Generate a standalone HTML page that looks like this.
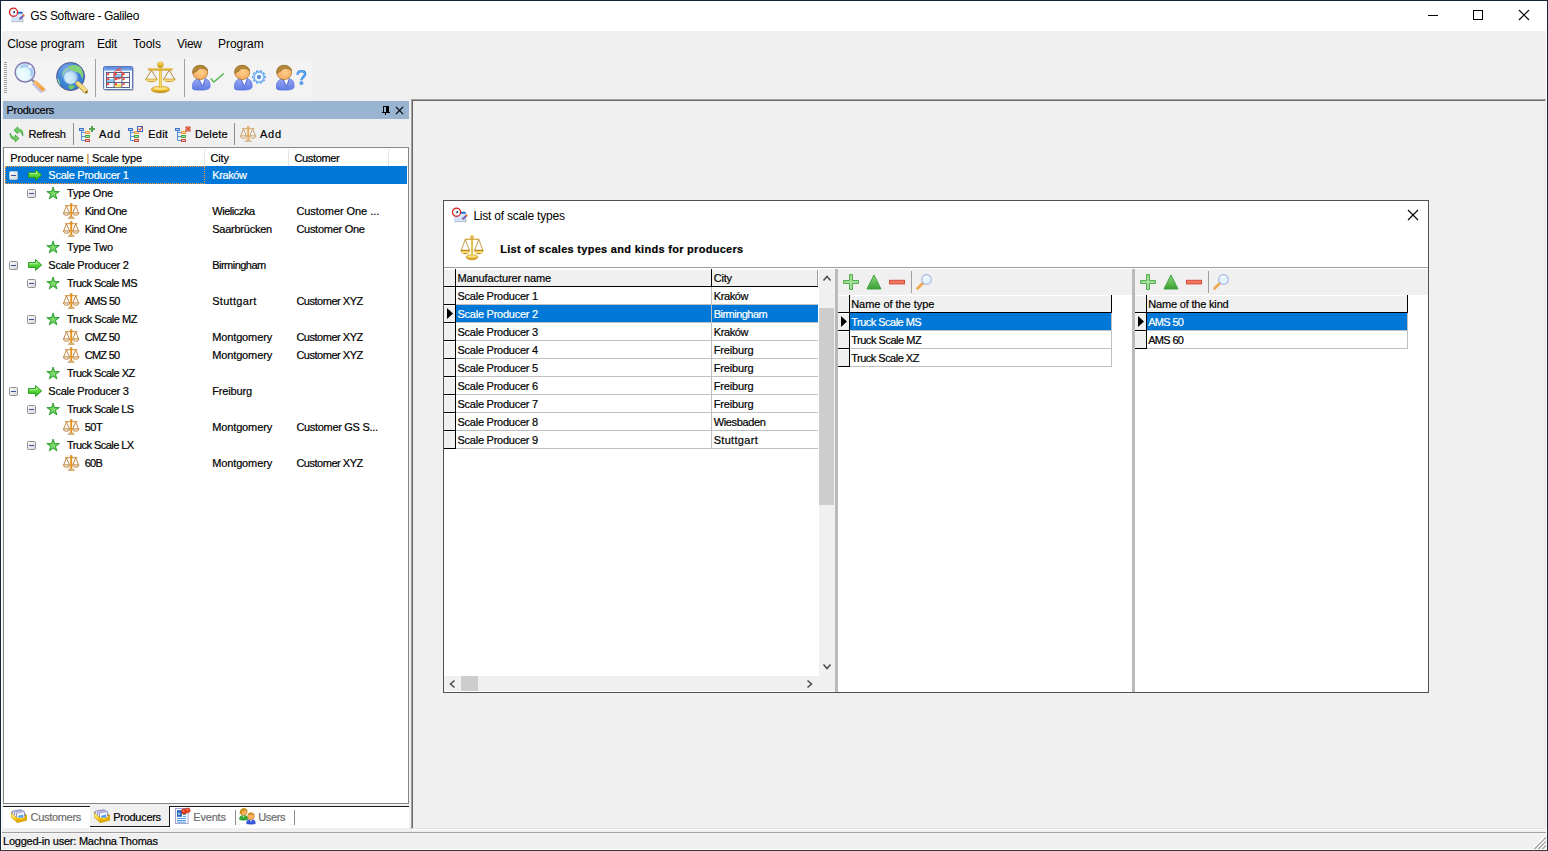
<!DOCTYPE html>
<html><head><meta charset="utf-8"><title>GS Software - Galileo</title>
<style>
html,body{margin:0;padding:0;}
body{width:1548px;height:851px;background:#f0f0f0;position:relative;overflow:hidden;font-family:"Liberation Sans",sans-serif;font-size:11px;}
div,span.t,svg{position:absolute;}
span.t{white-space:nowrap;line-height:16px;-webkit-text-stroke:0.2px;}
span.u{-webkit-text-stroke:0;}
svg{overflow:visible;}
</style></head><body>

<svg width="0" height="0" style="left:0;top:0"><defs>
<radialGradient id="gLens" cx="0.35" cy="0.65" r="0.8"><stop offset="0" stop-color="#f4ffff"/><stop offset="0.55" stop-color="#dcf6fc"/><stop offset="1" stop-color="#9cbcec"/></radialGradient>
<linearGradient id="gHandle" x1="0" y1="0" x2="1" y2="1"><stop offset="0" stop-color="#fbbd6a"/><stop offset="1" stop-color="#f09a3c"/></linearGradient>
<radialGradient id="gGlobe" cx="0.4" cy="0.3" r="0.8"><stop offset="0" stop-color="#8fb0ea"/><stop offset="0.5" stop-color="#3f86d8"/><stop offset="1" stop-color="#3a76c8"/></radialGradient>
<linearGradient id="gGold" x1="0" y1="0" x2="0" y2="1"><stop offset="0" stop-color="#fae480"/><stop offset="0.55" stop-color="#ecbc2c"/><stop offset="1" stop-color="#bc8414"/></linearGradient>
<linearGradient id="gGoldH" x1="0" y1="0" x2="1" y2="0"><stop offset="0" stop-color="#d9a520"/><stop offset="0.45" stop-color="#fbe27a"/><stop offset="1" stop-color="#d9a520"/></linearGradient>
<radialGradient id="gFace" cx="0.55" cy="0.45" r="0.7"><stop offset="0" stop-color="#ffd08c"/><stop offset="1" stop-color="#f3a458"/></radialGradient>
<linearGradient id="gBody" x1="0" y1="0" x2="0" y2="1"><stop offset="0" stop-color="#9aa8f4"/><stop offset="1" stop-color="#5f7be4"/></linearGradient>
<linearGradient id="gCalT" x1="0" y1="0" x2="0" y2="1"><stop offset="0" stop-color="#4f7fd6"/><stop offset="1" stop-color="#86b6f2"/></linearGradient>
<linearGradient id="gGreen" x1="0" y1="0" x2="0" y2="1"><stop offset="0" stop-color="#8fdc7c"/><stop offset="1" stop-color="#3aa035"/></linearGradient>
<linearGradient id="gArrow" x1="0" y1="0" x2="0" y2="1"><stop offset="0" stop-color="#b4f48c"/><stop offset="0.5" stop-color="#5cd83c"/><stop offset="1" stop-color="#2cae1c"/></linearGradient>
<linearGradient id="gExp" x1="0" y1="0" x2="1" y2="1"><stop offset="0" stop-color="#ffffff"/><stop offset="1" stop-color="#d4d4d4"/></linearGradient>
<linearGradient id="gBoxL" x1="0" y1="0" x2="1" y2="1"><stop offset="0" stop-color="#fff8a0"/><stop offset="0.6" stop-color="#fcd020"/><stop offset="1" stop-color="#e0a000"/></linearGradient>
</defs></svg>
<div style="left:0px;top:0px;width:1548px;height:851px;background:#f0f0f0;"></div>
<div style="left:1px;top:1px;width:1546px;height:30px;background:#ffffff;"></div>
<div style="left:1px;top:31px;width:1px;height:819px;background:#ffffff;"></div>
<div style="left:1546px;top:31px;width:1px;height:819px;background:#ffffff;"></div>
<div style="left:0px;top:0px;width:1548px;height:1px;background:#16233d;"></div>
<div style="left:0px;top:0px;width:1px;height:851px;background:#16233d;"></div>
<div style="left:1547px;top:0px;width:1px;height:851px;background:#16233d;"></div>
<div style="left:0px;top:850px;width:1548px;height:1px;background:#3a3a3a;"></div>
<svg style="left:9px;top:7px;" width="16" height="16" viewBox="0 0 16 16"><rect x="2.2" y="13.6" width="12" height="1.5" fill="#787878" opacity="0.8"/><rect x="2" y="5" width="11.8" height="9.4" fill="#dce9fb"/><rect x="2" y="9.5" width="11.8" height="4.9" fill="#cfe2fa"/><rect x="8" y="4.8" width="5.6" height="1.8" fill="#1264d4"/><rect x="13.4" y="5.6" width="0.8" height="9" fill="#8c8c94" opacity="0.7"/><circle cx="4.5" cy="5.3" r="4.1" fill="#eef8ff" stroke="#d41818" stroke-width="1.2"/><path d="M4.5 1.3V2.2M4.5 8.4V9.3M0.5 5.3H1.4M7.6 5.3H8.5" stroke="#f07040" stroke-width="0.8"/><path d="M5.2 4V5.6L4.4 5.8" stroke="#101020" stroke-width="1.1" fill="none"/><path d="M10.8 11.9L14 9.1" stroke="#6c5cc4" stroke-width="2"/><path d="M10.2 12.5L10.9 11.8" stroke="#c07818" stroke-width="1.6"/><path d="M14.1 9L15.2 8" stroke="#f04020" stroke-width="1.8"/><rect x="14.8" y="8.4" width="1" height="1" fill="#f8c820"/></svg>
<span class="t u" style="left:30.3px;top:7.84px;font-size:12px;color:#000;font-weight:400;letter-spacing:-0.352px;">GS Software - Galileo</span>
<svg style="left:1428px;top:10px;" width="10" height="10" viewBox="0 0 10 10"><path d="M0 5.5H10" stroke="#000" stroke-width="1"/></svg>
<svg style="left:1473px;top:10px;" width="10" height="10" viewBox="0 0 10 10"><rect x="0.5" y="0.5" width="9" height="9" fill="none" stroke="#000" stroke-width="1"/></svg>
<svg style="left:1519px;top:10px;" width="10" height="10" viewBox="0 0 10 10"><path d="M0 0L10 10M10 0L0 10" stroke="#000" stroke-width="1.1"/></svg>
<span class="t u" style="left:7.2px;top:35.84px;font-size:12px;color:#000;font-weight:400;letter-spacing:-0.117px;">Close program</span>
<span class="t u" style="left:97px;top:35.84px;font-size:12px;color:#000;font-weight:400;letter-spacing:-0.229px;">Edit</span>
<span class="t u" style="left:133px;top:35.84px;font-size:12px;color:#000;font-weight:400;letter-spacing:-0.004px;">Tools</span>
<span class="t u" style="left:177px;top:35.84px;font-size:12px;color:#000;font-weight:400;letter-spacing:-0.266px;">View</span>
<span class="t u" style="left:218px;top:35.84px;font-size:12px;color:#000;font-weight:400;letter-spacing:-0.053px;">Program</span>
<div style="left:2px;top:58px;width:311px;height:40px;background:#f3f3f3;"></div>
<div style="left:4px;top:62px;width:3px;height:1px;background:#a0a0a0;"></div>
<div style="left:4px;top:64px;width:3px;height:1px;background:#a0a0a0;"></div>
<div style="left:4px;top:66px;width:3px;height:1px;background:#a0a0a0;"></div>
<div style="left:4px;top:68px;width:3px;height:1px;background:#a0a0a0;"></div>
<div style="left:4px;top:70px;width:3px;height:1px;background:#a0a0a0;"></div>
<div style="left:4px;top:72px;width:3px;height:1px;background:#a0a0a0;"></div>
<div style="left:4px;top:74px;width:3px;height:1px;background:#a0a0a0;"></div>
<div style="left:4px;top:76px;width:3px;height:1px;background:#a0a0a0;"></div>
<div style="left:4px;top:78px;width:3px;height:1px;background:#a0a0a0;"></div>
<div style="left:4px;top:80px;width:3px;height:1px;background:#a0a0a0;"></div>
<div style="left:4px;top:82px;width:3px;height:1px;background:#a0a0a0;"></div>
<div style="left:4px;top:84px;width:3px;height:1px;background:#a0a0a0;"></div>
<div style="left:4px;top:86px;width:3px;height:1px;background:#a0a0a0;"></div>
<div style="left:4px;top:88px;width:3px;height:1px;background:#a0a0a0;"></div>
<div style="left:4px;top:90px;width:3px;height:1px;background:#a0a0a0;"></div>
<div style="left:4px;top:92px;width:3px;height:1px;background:#a0a0a0;"></div>
<div style="left:95px;top:59px;width:1px;height:38px;background:#a0a0a0;"></div>
<div style="left:184px;top:59px;width:1px;height:38px;background:#a0a0a0;"></div>
<svg style="left:14px;top:61px;" width="32" height="32" viewBox="0 0 32 32"><path d="M19 22L28.2 31.2" stroke="#c4c4ec" stroke-width="3.6"/><path d="M17.5 18.5L21 21.6" stroke="#8c8c94" stroke-width="2.2"/><path d="M20.6 20.4L30.6 29.8" stroke="url(#gHandle)" stroke-width="3.8"/><path d="M29.4 31L32 28.4" stroke="#d8d8e8" stroke-width="1.6"/><circle cx="11" cy="11.2" r="9.8" fill="url(#gLens)" stroke="#847eb2" stroke-width="1.5"/><path d="M6.5 6.5C10 3.5 15.5 4.5 17.5 10.5C17.8 12 17.5 14 17 15" stroke="#9cc0f0" stroke-width="2.6" fill="none" opacity="0.75"/><circle cx="15.8" cy="5.6" r="1.7" fill="#fff"/></svg>
<svg style="left:56px;top:61px;" width="32" height="32" viewBox="0 0 32 32"><circle cx="14.6" cy="15.5" r="14" fill="url(#gGlobe)" stroke="#585890" stroke-width="1.0"/><path d="M12 6C14 4 20 3 24 6C27 9 28 14 26.5 18C25 16 25 13 23 12C21 11 19 12 17 10C15 9 13 9 12 6Z" fill="#86d27a"/><path d="M12.5 6.5C10 7 7.5 9 6.5 12.5C6.3 13.5 6.5 15 7 16C7.5 13 9 10.5 11 9C12 8.3 12.5 7.5 12.5 6.5Z" fill="#9adc90" opacity="0.85"/><path d="M1.5 17C3 18 4 21 4 24C2.5 22 1.5 19 1.5 17Z" fill="#96e488"/><path d="M12 25C14 24 17 24 19 25C18 27 16 28.5 14 28.5C13 27.5 12.5 26 12 25Z" fill="#72cc62"/><circle cx="14.6" cy="16.4" r="6.9" fill="url(#gLens)" stroke="#86b0e4" stroke-width="0.9" opacity="0.82"/><path d="M21.8 22.6L29.8 30.2" stroke="#b89848" stroke-width="4.8" stroke-linecap="round"/><path d="M21.8 22.3L29.6 29.7" stroke="#f8dc84" stroke-width="3.4" stroke-linecap="round"/><circle cx="30.4" cy="30.9" r="0.9" fill="#604818"/></svg>
<svg style="left:102px;top:61px;" width="32" height="32" viewBox="0 0 32 32"><rect x="2.6" y="6.8" width="29.4" height="23.2" rx="1" fill="#808080" opacity="0.35"/><rect x="1.6" y="5.6" width="29" height="23" rx="1" fill="#f2f8ff" stroke="#4a6cb4" stroke-width="1"/><rect x="2.1" y="6.1" width="28" height="3.6" fill="url(#gCalT)"/><rect x="4.5" y="11.5" width="23" height="15" fill="#fafcff" stroke="#50507a" stroke-width="0.9"/><rect x="5.2" y="12.200000000000001" width="2" height="1.9" fill="#f23828"/><rect x="12.8" y="13.1" width="6.9" height="3.2" fill="#84c4f2"/><rect x="12.900000000000002" y="12.200000000000001" width="2" height="1.9" fill="#f23828"/><rect x="20.6" y="12.200000000000001" width="2" height="1.9" fill="#f23828"/><rect x="5.1000000000000005" y="18.099999999999998" width="6.9" height="3.2" fill="#8ccdf4"/><rect x="5.2" y="17.2" width="2" height="1.9" fill="#f23828"/><rect x="12.900000000000002" y="17.2" width="2" height="1.9" fill="#f23828"/><rect x="20.6" y="17.2" width="2" height="1.9" fill="#f23828"/><rect x="5.2" y="22.2" width="2" height="1.9" fill="#f23828"/><rect x="12.8" y="23.099999999999998" width="6.9" height="3.2" fill="#f8e468"/><rect x="12.900000000000002" y="22.2" width="2" height="1.9" fill="#f23828"/><rect x="20.6" y="22.2" width="2" height="1.9" fill="#f23828"/><path d="M12.2 11.5V26.5M19.9 11.5V26.5M4.5 16.5H27.5M4.5 21.5H27.5" stroke="#50507a" stroke-width="0.9"/><circle cx="16.2" cy="13.6" r="4.3" fill="none" stroke="#f04c3c" stroke-width="1.1"/><path d="M14.6 9.6C15.6 8.2 17.6 7.4 19.6 7.6" stroke="#f04c3c" stroke-width="1.1" fill="none"/></svg>
<svg style="left:144px;top:61px;" width="32" height="32" viewBox="0 0 32 32"><path d="M1.8000000000000003 18.3L7.4 9.3L13.0 18.3" fill="none" stroke="#a88030" stroke-width="0.9"/><path d="M19.599999999999998 18.3L25.2 9.3L30.8 18.3" fill="none" stroke="#a88030" stroke-width="0.9"/><ellipse cx="16.4" cy="28.5" rx="9.2" ry="3.3" fill="url(#gGold)" stroke="#b88418" stroke-width="0.6"/><ellipse cx="16.4" cy="27.675" rx="6.4399999999999995" ry="1.4849999999999999" fill="#fce88a" opacity="0.7"/><rect x="14.999999999999998" y="7.4" width="2.8" height="19.6" fill="url(#gGoldH)"/><rect x="4.5" y="7.4" width="23.7" height="1.9000000000000004" fill="url(#gGold)" stroke="#c89a28" stroke-width="0.4"/><circle cx="16.4" cy="3.8" r="3.0" fill="url(#gGold)" stroke="#c89a28" stroke-width="0.5"/><path d="M1.4000000000000004 18.0H13.4C13.4 21.625 1.4000000000000004 21.625 1.4000000000000004 18.0Z" fill="url(#gGold)" stroke="#b88418" stroke-width="0.5"/><path d="M2.2 19.595H12.6" stroke="#fdf0a0" stroke-width="0.87" opacity="0.8"/><path d="M19.2 18.0H31.2C31.2 21.625 19.2 21.625 19.2 18.0Z" fill="url(#gGold)" stroke="#b88418" stroke-width="0.5"/><path d="M20.0 19.595H30.4" stroke="#fdf0a0" stroke-width="0.87" opacity="0.8"/></svg>
<svg style="left:192px;top:61px;" width="32" height="32" viewBox="0 0 32 32"><path d="M0.5 27.4C0.2 22.5 1.2 19.8 4.6 18.4L7.4 17.6H12.6L14.6 18.2C17 19.2 18.2 21.5 18.1 25.6C18 28.2 14.5 29.1 9.2 29.1C4.2 29.1 0.7 28.9 0.5 27.4Z" fill="url(#gBody)" stroke="#4c6cd8" stroke-width="0.7"/><path d="M7 17.4L10.4 24.6L13 17.4Z" fill="#ffffff"/><path d="M6.2 18L10 26L10.5 24.6L7.2 17.6ZM13 17.6L10.4 24.6L11 26L14 18.2Z" fill="#6078dc"/><ellipse cx="8.2" cy="11.5" rx="7.4" ry="7.1" fill="url(#gFace)" stroke="#a8742c" stroke-width="0.8"/><path d="M0.8 12.4C0 7 3.6 4.2 8.4 4.3C12.6 4.4 15.2 6.8 15.7 9.6C13.4 7.6 9.4 7 6.4 8C5.8 9.6 5 10.6 3.4 10.9C2.6 11.1 1.8 11.6 0.8 12.4Z" fill="#b08838" stroke="#8c6424" stroke-width="0.5"/><path d="M18.8 17.4L21.9 21L31.6 12.6" fill="none" stroke="#52b852" stroke-width="1.5"/><path d="M19.6 17.2L22 19.8L30.5 12.6" stroke="#c0f0b0" stroke-width="0.6" fill="none" opacity="0.8"/></svg>
<svg style="left:234px;top:61px;" width="32" height="32" viewBox="0 0 32 32"><path d="M0.5 27.4C0.2 22.5 1.2 19.8 4.6 18.4L7.4 17.6H12.6L14.6 18.2C17 19.2 18.2 21.5 18.1 25.6C18 28.2 14.5 29.1 9.2 29.1C4.2 29.1 0.7 28.9 0.5 27.4Z" fill="url(#gBody)" stroke="#4c6cd8" stroke-width="0.7"/><path d="M7 17.4L10.4 24.6L13 17.4Z" fill="#ffffff"/><path d="M6.2 18L10 26L10.5 24.6L7.2 17.6ZM13 17.6L10.4 24.6L11 26L14 18.2Z" fill="#6078dc"/><ellipse cx="8.2" cy="11.5" rx="7.4" ry="7.1" fill="url(#gFace)" stroke="#a8742c" stroke-width="0.8"/><path d="M0.8 12.4C0 7 3.6 4.2 8.4 4.3C12.6 4.4 15.2 6.8 15.7 9.6C13.4 7.6 9.4 7 6.4 8C5.8 9.6 5 10.6 3.4 10.9C2.6 11.1 1.8 11.6 0.8 12.4Z" fill="#b08838" stroke="#8c6424" stroke-width="0.5"/><polygon points="31.58,15.48 31.58,16.52 29.76,17.14 29.53,17.88 30.63,19.45 30.02,20.29 28.18,19.73 27.56,20.18 27.53,22.10 26.54,22.42 25.38,20.88 24.62,20.88 23.46,22.42 22.47,22.10 22.44,20.18 21.82,19.73 19.98,20.29 19.37,19.45 20.47,17.88 20.24,17.14 18.42,16.52 18.42,15.48 20.24,14.86 20.47,14.12 19.37,12.55 19.98,11.71 21.82,12.27 22.44,11.82 22.47,9.90 23.46,9.58 24.62,11.12 25.38,11.12 26.54,9.58 27.53,9.90 27.56,11.82 28.18,12.27 30.02,11.71 30.63,12.55 29.53,14.12 29.76,14.86" fill="#9ccaf8" stroke="#4a96ec" stroke-width="0.9" stroke-linejoin="round"/><circle cx="25" cy="16" r="3.9" fill="#eef7ff"/><circle cx="25" cy="16" r="1.7" fill="#6c88c0" stroke="#4a86e0" stroke-width="0.8"/></svg>
<svg style="left:276px;top:61px;" width="32" height="32" viewBox="0 0 32 32"><path d="M0.5 27.4C0.2 22.5 1.2 19.8 4.6 18.4L7.4 17.6H12.6L14.6 18.2C17 19.2 18.2 21.5 18.1 25.6C18 28.2 14.5 29.1 9.2 29.1C4.2 29.1 0.7 28.9 0.5 27.4Z" fill="url(#gBody)" stroke="#4c6cd8" stroke-width="0.7"/><path d="M7 17.4L10.4 24.6L13 17.4Z" fill="#ffffff"/><path d="M6.2 18L10 26L10.5 24.6L7.2 17.6ZM13 17.6L10.4 24.6L11 26L14 18.2Z" fill="#6078dc"/><ellipse cx="8.2" cy="11.5" rx="7.4" ry="7.1" fill="url(#gFace)" stroke="#a8742c" stroke-width="0.8"/><path d="M0.8 12.4C0 7 3.6 4.2 8.4 4.3C12.6 4.4 15.2 6.8 15.7 9.6C13.4 7.6 9.4 7 6.4 8C5.8 9.6 5 10.6 3.4 10.9C2.6 11.1 1.8 11.6 0.8 12.4Z" fill="#b08838" stroke="#8c6424" stroke-width="0.5"/><g transform="translate(0,0.5)"><path d="M21.6 13.2C21.6 10.5 23.4 9.6 25.4 9.6C27.6 9.6 29.2 10.8 29.2 12.6C29.2 15.2 25.4 15.6 25.4 18.8" fill="none" stroke="#2f7fe0" stroke-width="2.4"/><path d="M21.6 13.2C21.6 10.5 23.4 9.6 25.4 9.6C27.6 9.6 29.2 10.8 29.2 12.6C29.2 15.2 25.4 15.6 25.4 18.8" fill="none" stroke="#7cc0ff" stroke-width="0.9"/><circle cx="25.4" cy="21.6" r="1.5" fill="#5aa8f8" stroke="#2f7fe0" stroke-width="0.8"/></g></svg>
<div style="left:3px;top:101px;width:406px;height:18px;background:#99b4d1;"></div>
<span class="t" style="left:6.5px;top:102.19px;font-size:11px;color:#000;font-weight:400;letter-spacing:-0.293px;">Producers</span>
<svg style="left:382px;top:105px;" width="9" height="10" viewBox="0 0 9 10"><g shape-rendering="crispEdges" fill="#000"><rect x="1" y="1" width="6" height="1"/><rect x="1" y="1" width="1" height="6"/><rect x="4" y="1" width="3" height="6"/><rect x="0" y="7" width="8" height="1"/><rect x="3" y="8" width="1" height="2"/></g></svg>
<svg style="left:395px;top:106px;" width="9" height="9" viewBox="0 0 9 9"><path d="M0.9 0.9L8.1 8.1M8.1 0.9L0.9 8.1" stroke="#000" stroke-width="1.15"/></svg>
<svg style="left:9px;top:126px;" width="16" height="16" viewBox="0 0 16 16"><path d="M5 4.3L8.8 0.9V3.2H11C13.2 3.8 14.3 6.2 13.8 9.8C13 8 12 6.2 10.5 5.6H8.8V7.8Z" fill="#70d060" stroke="#3c9c3c" stroke-width="0.8" stroke-linejoin="round"/><path d="M10 12.4L6.2 15.9V13.5H4.5C2.5 13 1 10.8 1.2 7C2 9 3 10.6 4.5 11.2H6.2V9.1Z" fill="#70d060" stroke="#3c9c3c" stroke-width="0.8" stroke-linejoin="round"/></svg>
<span class="t" style="left:28.5px;top:126.19px;font-size:11px;color:#000;font-weight:400;letter-spacing:-0.189px;">Refresh</span>
<div style="left:73px;top:123px;width:1px;height:22px;background:#8c8c8c;"></div>
<svg style="left:79px;top:126px;" width="16" height="16" viewBox="0 0 16 16"><path d="M2.5 5V14.5M2.5 6.5H6M2.5 10.5H6M2.5 14.5H6" stroke="#4a90e0" stroke-width="1" fill="none"/><rect x="0" y="2" width="5" height="3" fill="#4674c8"/><rect x="1" y="3" width="3" height="1" fill="#a8c4f0"/><rect x="6" y="5" width="5" height="3" fill="#f0a040"/><rect x="7" y="6" width="3" height="1" fill="#fcd8a0"/><rect x="6" y="9" width="5" height="3" fill="#48a848"/><rect x="7" y="10" width="3" height="1" fill="#a8e0a0"/><rect x="6" y="13" width="5" height="3" fill="#d05040"/><rect x="7" y="14" width="3" height="1" fill="#f8c0b8"/><path d="M13 0V6M10 3H16" stroke="#52a452" stroke-width="2"/></svg>
<span class="t" style="left:99px;top:126.19px;font-size:11px;color:#000;font-weight:400;letter-spacing:0.711px;">Add</span>
<svg style="left:128px;top:126px;" width="16" height="16" viewBox="0 0 16 16"><path d="M2.5 5V14.5M2.5 6.5H6M2.5 10.5H6M2.5 14.5H6" stroke="#4a90e0" stroke-width="1" fill="none"/><rect x="0" y="2" width="5" height="3" fill="#4674c8"/><rect x="1" y="3" width="3" height="1" fill="#a8c4f0"/><rect x="6" y="5" width="5" height="3" fill="#f0a040"/><rect x="7" y="6" width="3" height="1" fill="#fcd8a0"/><rect x="6" y="9" width="5" height="3" fill="#48a848"/><rect x="7" y="10" width="3" height="1" fill="#a8e0a0"/><rect x="6" y="13" width="5" height="3" fill="#d05040"/><rect x="7" y="14" width="3" height="1" fill="#f8c0b8"/><rect x="9.5" y="0.5" width="5" height="5" fill="#fff" stroke="#4464c4" stroke-width="1"/><path d="M10.4 2.6L11.8 4.2L14 1" stroke="#f05030" stroke-width="1.2" fill="none"/></svg>
<span class="t" style="left:148.3px;top:126.19px;font-size:11px;color:#000;font-weight:400;letter-spacing:0.210px;">Edit</span>
<svg style="left:175px;top:126px;" width="16" height="16" viewBox="0 0 16 16"><path d="M2.5 5V14.5M2.5 6.5H6M2.5 10.5H6M2.5 14.5H6" stroke="#4a90e0" stroke-width="1" fill="none"/><rect x="0" y="2" width="5" height="3" fill="#4674c8"/><rect x="1" y="3" width="3" height="1" fill="#a8c4f0"/><rect x="6" y="5" width="5" height="3" fill="#f0a040"/><rect x="7" y="6" width="3" height="1" fill="#fcd8a0"/><rect x="6" y="9" width="5" height="3" fill="#48a848"/><rect x="7" y="10" width="3" height="1" fill="#a8e0a0"/><rect x="6" y="13" width="5" height="3" fill="#d05040"/><rect x="7" y="14" width="3" height="1" fill="#f8c0b8"/><path d="M10.6 0.6L15.4 5.4M15.4 0.6L10.6 5.4" stroke="#d85840" stroke-width="1.5"/><path d="M13 0V6M10 3H16" stroke="#d85840" stroke-width="0.9"/></svg>
<span class="t" style="left:195px;top:126.19px;font-size:11px;color:#000;font-weight:400;letter-spacing:0.141px;">Delete</span>
<div style="left:234px;top:123px;width:1px;height:22px;background:#8c8c8c;"></div>
<svg style="left:240px;top:126px;opacity:0.72;" width="16" height="16" viewBox="0 0 16 16"><g fill="none" stroke="#b87c30" stroke-width="0.9"><path d="M0.7 9.8L3.5 2.9L6.4 9.8M9.8 9.8L12.7 2.9L15.5 9.8"/><path d="M2 2.7H14.4" stroke="#cc8c34" stroke-width="1"/><path d="M0.4 9.9H6.8C6.8 11.5 5.4 12.2 3.6 12.2C1.8 12.2 0.4 11.5 0.4 9.9ZM9.5 9.9H15.9C15.9 11.5 14.5 12.2 12.7 12.2C10.9 12.2 9.5 11.5 9.5 9.9Z" fill="#fff4e0" stroke="#b07428"/><path d="M8.2 1.4V14" stroke-width="1.9" stroke="#e8921a"/><circle cx="8.2" cy="1.2" r="1.05" fill="#e49a38" stroke="#c88428" stroke-width="0.5"/><path d="M4.9 15.1H11.5" stroke-width="1.2" stroke="#c08a3c"/><path d="M6.2 13.9H10.2" stroke="#d09a48"/></g></svg>
<span class="t" style="left:260px;top:126.19px;font-size:11px;color:#000;font-weight:400;letter-spacing:0.711px;">Add</span>
<div style="left:3px;top:147px;width:406px;height:657px;background:#ffffff;box-sizing:border-box;border:1px solid #828790;"></div>
<div style="left:204px;top:149px;width:1px;height:17px;background:#e5e5e5;"></div>
<div style="left:288px;top:149px;width:1px;height:17px;background:#e5e5e5;"></div>
<div style="left:388px;top:149px;width:1px;height:17px;background:#e5e5e5;"></div>
<span class="t" style="left:10.3px;top:150.19px;font-size:11px;color:#000;font-weight:400;letter-spacing:-0.154px;">Producer name <span style="color:#c07a28">|</span> Scale type</span>
<span class="t" style="left:210.5px;top:150.19px;font-size:11px;color:#000;font-weight:400;letter-spacing:-0.184px;">City</span>
<span class="t" style="left:294.5px;top:150.19px;font-size:11px;color:#000;font-weight:400;letter-spacing:-0.355px;">Customer</span>
<div style="left:5px;top:166px;width:402px;height:18px;background:#0078d7;"></div>
<div style="left:5px;top:166px;width:200px;height:18px;box-sizing:border-box;border:1px dotted #ff9a3c;"></div>
<svg style="left:9px;top:171px;" width="9" height="9" viewBox="0 0 9 9"><rect x="0.5" y="0.5" width="8" height="8" rx="1" fill="url(#gExp)" stroke="#b0c4dc" stroke-width="1"/><path d="M2 4.5H7" stroke="#3a4fa0" stroke-width="1"/></svg>
<svg style="left:27.3px;top:168px;" width="16" height="14" viewBox="0 0 16 14"><path d="M1.5 4.6H8.6V1.6L14.6 7L8.6 12.4V9.4H1.5Z" fill="url(#gArrow)" stroke="#229a22" stroke-width="1" stroke-linejoin="round"/><path d="M2.4 5.6H9.4V3.8" stroke="#d0fab8" stroke-width="0.8" fill="none" opacity="0.8"/></svg>
<span class="t" style="left:48.3px;top:167.19px;font-size:11px;color:#fff;font-weight:400;letter-spacing:-0.253px;">Scale Producer 1</span>
<span class="t" style="left:212.2px;top:167.19px;font-size:11px;color:#fff;font-weight:400;letter-spacing:-0.378px;">Kraków</span>
<svg style="left:27px;top:189px;" width="9" height="9" viewBox="0 0 9 9"><rect x="0.5" y="0.5" width="8" height="8" rx="1" fill="url(#gExp)" stroke="#919191" stroke-width="1"/><path d="M2 4.5H7" stroke="#3a4fa0" stroke-width="1"/></svg>
<svg style="left:45px;top:186px;" width="15" height="14" viewBox="0 0 15 14"><path d="M8.10 1.00L9.60 5.54L14.38 5.56L10.53 8.39L11.98 12.94L8.10 10.15L4.22 12.94L5.67 8.39L1.82 5.56L6.60 5.54Z" fill="#58c448" stroke="#2c9c30" stroke-width="0.9" stroke-linejoin="round"/><path d="M8.10 4.10L8.98 6.49L11.52 6.59L9.53 8.16L10.22 10.61L8.10 9.20L5.98 10.61L6.67 8.16L4.68 6.59L7.22 6.49Z" fill="#8ee47c" opacity="0.75"/></svg>
<span class="t" style="left:67px;top:185.19px;font-size:11px;color:#000;font-weight:400;letter-spacing:-0.215px;">Type One</span>
<svg style="left:63px;top:203px;" width="16" height="16" viewBox="0 0 16 16"><g fill="none" stroke="#b87c30" stroke-width="0.9"><path d="M0.7 9.8L3.5 2.9L6.4 9.8M9.8 9.8L12.7 2.9L15.5 9.8"/><path d="M2 2.7H14.4" stroke="#cc8c34" stroke-width="1"/><path d="M0.4 9.9H6.8C6.8 11.5 5.4 12.2 3.6 12.2C1.8 12.2 0.4 11.5 0.4 9.9ZM9.5 9.9H15.9C15.9 11.5 14.5 12.2 12.7 12.2C10.9 12.2 9.5 11.5 9.5 9.9Z" fill="#fff4e0" stroke="#b07428"/><path d="M8.2 1.4V14" stroke-width="1.9" stroke="#e8921a"/><circle cx="8.2" cy="1.2" r="1.05" fill="#e49a38" stroke="#c88428" stroke-width="0.5"/><path d="M4.9 15.1H11.5" stroke-width="1.2" stroke="#c08a3c"/><path d="M6.2 13.9H10.2" stroke="#d09a48"/></g></svg>
<span class="t" style="left:84.7px;top:203.19px;font-size:11px;color:#000;font-weight:400;letter-spacing:-0.482px;">Kind One</span>
<span class="t" style="left:212.2px;top:203.19px;font-size:11px;color:#000;font-weight:400;letter-spacing:-0.444px;">Wieliczka</span>
<span class="t" style="left:296.4px;top:203.19px;font-size:11px;color:#000;font-weight:400;letter-spacing:-0.064px;">Customer One ...</span>
<svg style="left:63px;top:221px;" width="16" height="16" viewBox="0 0 16 16"><g fill="none" stroke="#b87c30" stroke-width="0.9"><path d="M0.7 9.8L3.5 2.9L6.4 9.8M9.8 9.8L12.7 2.9L15.5 9.8"/><path d="M2 2.7H14.4" stroke="#cc8c34" stroke-width="1"/><path d="M0.4 9.9H6.8C6.8 11.5 5.4 12.2 3.6 12.2C1.8 12.2 0.4 11.5 0.4 9.9ZM9.5 9.9H15.9C15.9 11.5 14.5 12.2 12.7 12.2C10.9 12.2 9.5 11.5 9.5 9.9Z" fill="#fff4e0" stroke="#b07428"/><path d="M8.2 1.4V14" stroke-width="1.9" stroke="#e8921a"/><circle cx="8.2" cy="1.2" r="1.05" fill="#e49a38" stroke="#c88428" stroke-width="0.5"/><path d="M4.9 15.1H11.5" stroke-width="1.2" stroke="#c08a3c"/><path d="M6.2 13.9H10.2" stroke="#d09a48"/></g></svg>
<span class="t" style="left:84.7px;top:221.19px;font-size:11px;color:#000;font-weight:400;letter-spacing:-0.482px;">Kind One</span>
<span class="t" style="left:212.2px;top:221.19px;font-size:11px;color:#000;font-weight:400;letter-spacing:-0.237px;">Saarbrücken</span>
<span class="t" style="left:296.4px;top:221.19px;font-size:11px;color:#000;font-weight:400;letter-spacing:-0.276px;">Customer One</span>
<svg style="left:45px;top:240px;" width="15" height="14" viewBox="0 0 15 14"><path d="M8.10 1.00L9.60 5.54L14.38 5.56L10.53 8.39L11.98 12.94L8.10 10.15L4.22 12.94L5.67 8.39L1.82 5.56L6.60 5.54Z" fill="#58c448" stroke="#2c9c30" stroke-width="0.9" stroke-linejoin="round"/><path d="M8.10 4.10L8.98 6.49L11.52 6.59L9.53 8.16L10.22 10.61L8.10 9.20L5.98 10.61L6.67 8.16L4.68 6.59L7.22 6.49Z" fill="#8ee47c" opacity="0.75"/></svg>
<span class="t" style="left:67px;top:239.19px;font-size:11px;color:#000;font-weight:400;letter-spacing:-0.099px;">Type Two</span>
<svg style="left:9px;top:261px;" width="9" height="9" viewBox="0 0 9 9"><rect x="0.5" y="0.5" width="8" height="8" rx="1" fill="url(#gExp)" stroke="#919191" stroke-width="1"/><path d="M2 4.5H7" stroke="#3a4fa0" stroke-width="1"/></svg>
<svg style="left:27.3px;top:258px;" width="16" height="14" viewBox="0 0 16 14"><path d="M1.5 4.6H8.6V1.6L14.6 7L8.6 12.4V9.4H1.5Z" fill="url(#gArrow)" stroke="#229a22" stroke-width="1" stroke-linejoin="round"/><path d="M2.4 5.6H9.4V3.8" stroke="#d0fab8" stroke-width="0.8" fill="none" opacity="0.8"/></svg>
<span class="t" style="left:48.3px;top:257.19px;font-size:11px;color:#000;font-weight:400;letter-spacing:-0.253px;">Scale Producer 2</span>
<span class="t" style="left:212.2px;top:257.19px;font-size:11px;color:#000;font-weight:400;letter-spacing:-0.521px;">Birmingham</span>
<svg style="left:27px;top:279px;" width="9" height="9" viewBox="0 0 9 9"><rect x="0.5" y="0.5" width="8" height="8" rx="1" fill="url(#gExp)" stroke="#919191" stroke-width="1"/><path d="M2 4.5H7" stroke="#3a4fa0" stroke-width="1"/></svg>
<svg style="left:45px;top:276px;" width="15" height="14" viewBox="0 0 15 14"><path d="M8.10 1.00L9.60 5.54L14.38 5.56L10.53 8.39L11.98 12.94L8.10 10.15L4.22 12.94L5.67 8.39L1.82 5.56L6.60 5.54Z" fill="#58c448" stroke="#2c9c30" stroke-width="0.9" stroke-linejoin="round"/><path d="M8.10 4.10L8.98 6.49L11.52 6.59L9.53 8.16L10.22 10.61L8.10 9.20L5.98 10.61L6.67 8.16L4.68 6.59L7.22 6.49Z" fill="#8ee47c" opacity="0.75"/></svg>
<span class="t" style="left:67px;top:275.19px;font-size:11px;color:#000;font-weight:400;letter-spacing:-0.518px;">Truck Scale MS</span>
<svg style="left:63px;top:293px;" width="16" height="16" viewBox="0 0 16 16"><g fill="none" stroke="#b87c30" stroke-width="0.9"><path d="M0.7 9.8L3.5 2.9L6.4 9.8M9.8 9.8L12.7 2.9L15.5 9.8"/><path d="M2 2.7H14.4" stroke="#cc8c34" stroke-width="1"/><path d="M0.4 9.9H6.8C6.8 11.5 5.4 12.2 3.6 12.2C1.8 12.2 0.4 11.5 0.4 9.9ZM9.5 9.9H15.9C15.9 11.5 14.5 12.2 12.7 12.2C10.9 12.2 9.5 11.5 9.5 9.9Z" fill="#fff4e0" stroke="#b07428"/><path d="M8.2 1.4V14" stroke-width="1.9" stroke="#e8921a"/><circle cx="8.2" cy="1.2" r="1.05" fill="#e49a38" stroke="#c88428" stroke-width="0.5"/><path d="M4.9 15.1H11.5" stroke-width="1.2" stroke="#c08a3c"/><path d="M6.2 13.9H10.2" stroke="#d09a48"/></g></svg>
<span class="t" style="left:84.7px;top:293.19px;font-size:11px;color:#000;font-weight:400;letter-spacing:-0.668px;">AMS 50</span>
<span class="t" style="left:212.2px;top:293.19px;font-size:11px;color:#000;font-weight:400;letter-spacing:0.303px;">Stuttgart</span>
<span class="t" style="left:296.4px;top:293.19px;font-size:11px;color:#000;font-weight:400;letter-spacing:-0.476px;">Customer XYZ</span>
<svg style="left:27px;top:315px;" width="9" height="9" viewBox="0 0 9 9"><rect x="0.5" y="0.5" width="8" height="8" rx="1" fill="url(#gExp)" stroke="#919191" stroke-width="1"/><path d="M2 4.5H7" stroke="#3a4fa0" stroke-width="1"/></svg>
<svg style="left:45px;top:312px;" width="15" height="14" viewBox="0 0 15 14"><path d="M8.10 1.00L9.60 5.54L14.38 5.56L10.53 8.39L11.98 12.94L8.10 10.15L4.22 12.94L5.67 8.39L1.82 5.56L6.60 5.54Z" fill="#58c448" stroke="#2c9c30" stroke-width="0.9" stroke-linejoin="round"/><path d="M8.10 4.10L8.98 6.49L11.52 6.59L9.53 8.16L10.22 10.61L8.10 9.20L5.98 10.61L6.67 8.16L4.68 6.59L7.22 6.49Z" fill="#8ee47c" opacity="0.75"/></svg>
<span class="t" style="left:67px;top:311.19px;font-size:11px;color:#000;font-weight:400;letter-spacing:-0.470px;">Truck Scale MZ</span>
<svg style="left:63px;top:329px;" width="16" height="16" viewBox="0 0 16 16"><g fill="none" stroke="#b87c30" stroke-width="0.9"><path d="M0.7 9.8L3.5 2.9L6.4 9.8M9.8 9.8L12.7 2.9L15.5 9.8"/><path d="M2 2.7H14.4" stroke="#cc8c34" stroke-width="1"/><path d="M0.4 9.9H6.8C6.8 11.5 5.4 12.2 3.6 12.2C1.8 12.2 0.4 11.5 0.4 9.9ZM9.5 9.9H15.9C15.9 11.5 14.5 12.2 12.7 12.2C10.9 12.2 9.5 11.5 9.5 9.9Z" fill="#fff4e0" stroke="#b07428"/><path d="M8.2 1.4V14" stroke-width="1.9" stroke="#e8921a"/><circle cx="8.2" cy="1.2" r="1.05" fill="#e49a38" stroke="#c88428" stroke-width="0.5"/><path d="M4.9 15.1H11.5" stroke-width="1.2" stroke="#c08a3c"/><path d="M6.2 13.9H10.2" stroke="#d09a48"/></g></svg>
<span class="t" style="left:84.7px;top:329.19px;font-size:11px;color:#000;font-weight:400;letter-spacing:-0.725px;">CMZ 50</span>
<span class="t" style="left:212.2px;top:329.19px;font-size:11px;color:#000;font-weight:400;letter-spacing:-0.127px;">Montgomery</span>
<span class="t" style="left:296.4px;top:329.19px;font-size:11px;color:#000;font-weight:400;letter-spacing:-0.476px;">Customer XYZ</span>
<svg style="left:63px;top:347px;" width="16" height="16" viewBox="0 0 16 16"><g fill="none" stroke="#b87c30" stroke-width="0.9"><path d="M0.7 9.8L3.5 2.9L6.4 9.8M9.8 9.8L12.7 2.9L15.5 9.8"/><path d="M2 2.7H14.4" stroke="#cc8c34" stroke-width="1"/><path d="M0.4 9.9H6.8C6.8 11.5 5.4 12.2 3.6 12.2C1.8 12.2 0.4 11.5 0.4 9.9ZM9.5 9.9H15.9C15.9 11.5 14.5 12.2 12.7 12.2C10.9 12.2 9.5 11.5 9.5 9.9Z" fill="#fff4e0" stroke="#b07428"/><path d="M8.2 1.4V14" stroke-width="1.9" stroke="#e8921a"/><circle cx="8.2" cy="1.2" r="1.05" fill="#e49a38" stroke="#c88428" stroke-width="0.5"/><path d="M4.9 15.1H11.5" stroke-width="1.2" stroke="#c08a3c"/><path d="M6.2 13.9H10.2" stroke="#d09a48"/></g></svg>
<span class="t" style="left:84.7px;top:347.19px;font-size:11px;color:#000;font-weight:400;letter-spacing:-0.725px;">CMZ 50</span>
<span class="t" style="left:212.2px;top:347.19px;font-size:11px;color:#000;font-weight:400;letter-spacing:-0.127px;">Montgomery</span>
<span class="t" style="left:296.4px;top:347.19px;font-size:11px;color:#000;font-weight:400;letter-spacing:-0.476px;">Customer XYZ</span>
<svg style="left:45px;top:366px;" width="15" height="14" viewBox="0 0 15 14"><path d="M8.10 1.00L9.60 5.54L14.38 5.56L10.53 8.39L11.98 12.94L8.10 10.15L4.22 12.94L5.67 8.39L1.82 5.56L6.60 5.54Z" fill="#58c448" stroke="#2c9c30" stroke-width="0.9" stroke-linejoin="round"/><path d="M8.10 4.10L8.98 6.49L11.52 6.59L9.53 8.16L10.22 10.61L8.10 9.20L5.98 10.61L6.67 8.16L4.68 6.59L7.22 6.49Z" fill="#8ee47c" opacity="0.75"/></svg>
<span class="t" style="left:67px;top:365.19px;font-size:11px;color:#000;font-weight:400;letter-spacing:-0.506px;">Truck Scale XZ</span>
<svg style="left:9px;top:387px;" width="9" height="9" viewBox="0 0 9 9"><rect x="0.5" y="0.5" width="8" height="8" rx="1" fill="url(#gExp)" stroke="#919191" stroke-width="1"/><path d="M2 4.5H7" stroke="#3a4fa0" stroke-width="1"/></svg>
<svg style="left:27.3px;top:384px;" width="16" height="14" viewBox="0 0 16 14"><path d="M1.5 4.6H8.6V1.6L14.6 7L8.6 12.4V9.4H1.5Z" fill="url(#gArrow)" stroke="#229a22" stroke-width="1" stroke-linejoin="round"/><path d="M2.4 5.6H9.4V3.8" stroke="#d0fab8" stroke-width="0.8" fill="none" opacity="0.8"/></svg>
<span class="t" style="left:48.3px;top:383.19px;font-size:11px;color:#000;font-weight:400;letter-spacing:-0.253px;">Scale Producer 3</span>
<span class="t" style="left:212.2px;top:383.19px;font-size:11px;color:#000;font-weight:400;letter-spacing:-0.138px;">Freiburg</span>
<svg style="left:27px;top:405px;" width="9" height="9" viewBox="0 0 9 9"><rect x="0.5" y="0.5" width="8" height="8" rx="1" fill="url(#gExp)" stroke="#919191" stroke-width="1"/><path d="M2 4.5H7" stroke="#3a4fa0" stroke-width="1"/></svg>
<svg style="left:45px;top:402px;" width="15" height="14" viewBox="0 0 15 14"><path d="M8.10 1.00L9.60 5.54L14.38 5.56L10.53 8.39L11.98 12.94L8.10 10.15L4.22 12.94L5.67 8.39L1.82 5.56L6.60 5.54Z" fill="#58c448" stroke="#2c9c30" stroke-width="0.9" stroke-linejoin="round"/><path d="M8.10 4.10L8.98 6.49L11.52 6.59L9.53 8.16L10.22 10.61L8.10 9.20L5.98 10.61L6.67 8.16L4.68 6.59L7.22 6.49Z" fill="#8ee47c" opacity="0.75"/></svg>
<span class="t" style="left:67px;top:401.19px;font-size:11px;color:#000;font-weight:400;letter-spacing:-0.537px;">Truck Scale LS</span>
<svg style="left:63px;top:419px;" width="16" height="16" viewBox="0 0 16 16"><g fill="none" stroke="#b87c30" stroke-width="0.9"><path d="M0.7 9.8L3.5 2.9L6.4 9.8M9.8 9.8L12.7 2.9L15.5 9.8"/><path d="M2 2.7H14.4" stroke="#cc8c34" stroke-width="1"/><path d="M0.4 9.9H6.8C6.8 11.5 5.4 12.2 3.6 12.2C1.8 12.2 0.4 11.5 0.4 9.9ZM9.5 9.9H15.9C15.9 11.5 14.5 12.2 12.7 12.2C10.9 12.2 9.5 11.5 9.5 9.9Z" fill="#fff4e0" stroke="#b07428"/><path d="M8.2 1.4V14" stroke-width="1.9" stroke="#e8921a"/><circle cx="8.2" cy="1.2" r="1.05" fill="#e49a38" stroke="#c88428" stroke-width="0.5"/><path d="M4.9 15.1H11.5" stroke-width="1.2" stroke="#c08a3c"/><path d="M6.2 13.9H10.2" stroke="#d09a48"/></g></svg>
<span class="t" style="left:84.7px;top:419.19px;font-size:11px;color:#000;font-weight:400;letter-spacing:-0.434px;">50T</span>
<span class="t" style="left:212.2px;top:419.19px;font-size:11px;color:#000;font-weight:400;letter-spacing:-0.127px;">Montgomery</span>
<span class="t" style="left:296.4px;top:419.19px;font-size:11px;color:#000;font-weight:400;letter-spacing:-0.307px;">Customer GS S...</span>
<svg style="left:27px;top:441px;" width="9" height="9" viewBox="0 0 9 9"><rect x="0.5" y="0.5" width="8" height="8" rx="1" fill="url(#gExp)" stroke="#919191" stroke-width="1"/><path d="M2 4.5H7" stroke="#3a4fa0" stroke-width="1"/></svg>
<svg style="left:45px;top:438px;" width="15" height="14" viewBox="0 0 15 14"><path d="M8.10 1.00L9.60 5.54L14.38 5.56L10.53 8.39L11.98 12.94L8.10 10.15L4.22 12.94L5.67 8.39L1.82 5.56L6.60 5.54Z" fill="#58c448" stroke="#2c9c30" stroke-width="0.9" stroke-linejoin="round"/><path d="M8.10 4.10L8.98 6.49L11.52 6.59L9.53 8.16L10.22 10.61L8.10 9.20L5.98 10.61L6.67 8.16L4.68 6.59L7.22 6.49Z" fill="#8ee47c" opacity="0.75"/></svg>
<span class="t" style="left:67px;top:437.19px;font-size:11px;color:#000;font-weight:400;letter-spacing:-0.537px;">Truck Scale LX</span>
<svg style="left:63px;top:455px;" width="16" height="16" viewBox="0 0 16 16"><g fill="none" stroke="#b87c30" stroke-width="0.9"><path d="M0.7 9.8L3.5 2.9L6.4 9.8M9.8 9.8L12.7 2.9L15.5 9.8"/><path d="M2 2.7H14.4" stroke="#cc8c34" stroke-width="1"/><path d="M0.4 9.9H6.8C6.8 11.5 5.4 12.2 3.6 12.2C1.8 12.2 0.4 11.5 0.4 9.9ZM9.5 9.9H15.9C15.9 11.5 14.5 12.2 12.7 12.2C10.9 12.2 9.5 11.5 9.5 9.9Z" fill="#fff4e0" stroke="#b07428"/><path d="M8.2 1.4V14" stroke-width="1.9" stroke="#e8921a"/><circle cx="8.2" cy="1.2" r="1.05" fill="#e49a38" stroke="#c88428" stroke-width="0.5"/><path d="M4.9 15.1H11.5" stroke-width="1.2" stroke="#c08a3c"/><path d="M6.2 13.9H10.2" stroke="#d09a48"/></g></svg>
<span class="t" style="left:84.7px;top:455.19px;font-size:11px;color:#000;font-weight:400;letter-spacing:-0.739px;">60B</span>
<span class="t" style="left:212.2px;top:455.19px;font-size:11px;color:#000;font-weight:400;letter-spacing:-0.127px;">Montgomery</span>
<span class="t" style="left:296.4px;top:455.19px;font-size:11px;color:#000;font-weight:400;letter-spacing:-0.476px;">Customer XYZ</span>
<div style="left:3px;top:807px;width:406px;height:21px;background:#ffffff;"></div>
<div style="left:3px;top:806px;width:406px;height:1px;background:#1a1a1a;"></div>
<div style="left:90px;top:806px;width:80px;height:21px;background:#f0f0f0;"></div>
<div style="left:90px;top:826px;width:80px;height:1px;background:#1a1a1a;"></div>
<div style="left:169px;top:806px;width:1px;height:21px;background:#1a1a1a;"></div>
<svg style="left:10px;top:809px;" width="18" height="15" viewBox="0 0 18 15"><path d="M1 3L1 8.3L7.3 13.9L16.9 11.4L16.9 6.3L10.7 0.7Z" fill="#c89400"/><path d="M2 2.2L10.6 0.8L14.9 3.2L14.9 7.4L11.8 9.8L7.3 8.8L2 4.6Z" fill="#f6f8ff"/><path d="M2 2.3L10.6 0.9L14.8 3.2" stroke="#8c8cc4" stroke-width="1.1" fill="none"/><path d="M2.4 2.6V4.6M4.4 3V6.4M6.4 3.4V8M14.6 3.4V7" stroke="#8888c0" stroke-width="1"/><path d="M3.2 2.5L10.4 1.4L13.6 3.2L7.4 4.6Z" fill="#b4b4dc"/><path d="M8.2 6.8L13 5.4L13.4 8L11.6 9.6L8.2 8.8Z" fill="#58a0ec"/><path d="M1.5 4.4L7.3 9.4L7.3 13.2L1.5 8Z" fill="url(#gBoxL)"/><path d="M7.3 9.4L11.8 10.2L16.4 7L16.4 11L7.3 13.3Z" fill="#e8b000"/><path d="M7.3 9.4L11.8 10.2L13.2 9.2L11 8.8L8.6 8.4Z" fill="#ffd830"/></svg>
<span class="t" style="left:30.5px;top:809.19px;font-size:11px;color:#6d6d6d;font-weight:400;letter-spacing:-0.298px;">Customers</span>
<svg style="left:93px;top:809px;" width="18" height="15" viewBox="0 0 18 15"><path d="M1 3L1 8.3L7.3 13.9L16.9 11.4L16.9 6.3L10.7 0.7Z" fill="#c89400"/><path d="M2 2.2L10.6 0.8L14.9 3.2L14.9 7.4L11.8 9.8L7.3 8.8L2 4.6Z" fill="#f6f8ff"/><path d="M2 2.3L10.6 0.9L14.8 3.2" stroke="#8c8cc4" stroke-width="1.1" fill="none"/><path d="M2.4 2.6V4.6M4.4 3V6.4M6.4 3.4V8M14.6 3.4V7" stroke="#8888c0" stroke-width="1"/><path d="M3.2 2.5L10.4 1.4L13.6 3.2L7.4 4.6Z" fill="#b4b4dc"/><path d="M8.2 6.8L13 5.4L13.4 8L11.6 9.6L8.2 8.8Z" fill="#58a0ec"/><path d="M1.5 4.4L7.3 9.4L7.3 13.2L1.5 8Z" fill="url(#gBoxL)"/><path d="M7.3 9.4L11.8 10.2L16.4 7L16.4 11L7.3 13.3Z" fill="#e8b000"/><path d="M7.3 9.4L11.8 10.2L13.2 9.2L11 8.8L8.6 8.4Z" fill="#ffd830"/></svg>
<span class="t" style="left:113.3px;top:809.19px;font-size:11px;color:#000;font-weight:400;letter-spacing:-0.293px;">Producers</span>
<svg style="left:175px;top:808px;" width="16" height="16" viewBox="0 0 16 16"><rect x="0.5" y="0.5" width="12.5" height="15" fill="#fdfdff" stroke="#a4a4d4" stroke-width="1"/><rect x="2" y="2.2" width="5" height="6.6" fill="#2464c8"/><rect x="3" y="4.6" width="2" height="2.2" fill="#88c8f0"/><rect x="3" y="5.6" width="1" height="1" fill="#e8e040"/><path d="M8 6.5H11M8 8.5H11M2 10.5H11M2 12.5H11M2 14.1H11" stroke="#3c94e4" stroke-width="0.9"/><path d="M7.4 5.4L5.6 7.6" stroke="#787878" stroke-width="0.9"/><circle cx="9.2" cy="3.4" r="2.7" fill="#e83c18" stroke="#b82008" stroke-width="0.5"/><circle cx="8.6" cy="2.8" r="0.9" fill="#ff9070"/><circle cx="12.8" cy="2.4" r="2.4" fill="#ee4420" stroke="#b82008" stroke-width="0.5"/><circle cx="12.3" cy="1.8" r="0.8" fill="#ffa080"/></svg>
<span class="t" style="left:193.3px;top:809.19px;font-size:11px;color:#6d6d6d;font-weight:400;letter-spacing:-0.188px;">Events</span>
<div style="left:235px;top:810px;width:1px;height:15px;background:#8c8c8c;"></div>
<svg style="left:239px;top:808px;" width="17" height="17" viewBox="0 0 17 17"><path d="M0.6 11.6C0.4 8.6 2 7.2 4.6 7.2C7.2 7.2 9 8.6 8.8 11.6C7 12.4 2.4 12.4 0.6 11.6Z" fill="#34a834" stroke="#1f8a1f" stroke-width="0.6"/><path d="M3.4 7.4L4.6 9.6L5.8 7.4Z" fill="#e8f8e8"/><circle cx="4.8" cy="3.9" r="3.3" fill="#fcb060" stroke="#b87c28" stroke-width="0.6"/><path d="M0.8 6.6C0.2 2.4 2.4 0.2 5 0.3C7.4 0.4 8.6 1.8 8.6 3.4C7.2 2.4 5 2.4 3.6 3.2C2.8 4.4 2.4 6 0.8 6.6Z" fill="#c8921c"/><path d="M7.6 15.6C7.4 12.8 9 11.6 12 11.6C15 11.6 16.4 12.8 16.2 15.6C14 16.3 9.6 16.3 7.6 15.6Z" fill="#3858e0" stroke="#2038b8" stroke-width="0.6"/><path d="M10.8 11.8L12 14L13.2 11.8Z" fill="#e8ecff"/><circle cx="12" cy="8.3" r="3.4" fill="#fcb060" stroke="#b87c28" stroke-width="0.6"/><path d="M8.8 7.6C8.8 5.2 10.6 4.4 12.4 4.6C14.2 4.8 15.4 6 15.4 7.4C14.2 6.4 11.8 6.2 10.6 6.8C10 7.2 9.4 7.6 8.8 7.6Z" fill="#c8921c"/></svg>
<span class="t" style="left:258.3px;top:809.19px;font-size:11px;color:#6d6d6d;font-weight:400;letter-spacing:-0.409px;">Users</span>
<div style="left:294px;top:810px;width:1px;height:15px;background:#8c8c8c;"></div>
<div style="left:2px;top:832px;width:1544px;height:1px;background:#a0a0a0;"></div>
<div style="left:2px;top:833px;width:1544px;height:1px;background:#f7f7f7;"></div>
<div style="left:1px;top:849px;width:1546px;height:1px;background:#ffffff;"></div>
<span class="t" style="left:3px;top:833.19px;font-size:11px;color:#000;font-weight:400;letter-spacing:-0.223px;">Logged-in user: Machna Thomas</span>
<svg style="left:1534px;top:837px;" width="12" height="12" viewBox="0 0 12 12"><path d="M12 0L0 12M12 4L4 12M12 8L8 12" stroke="#fff" stroke-width="1.2" transform="translate(-0.9,-0.9)"/><path d="M12 0.4L0.4 12M12 4.4L4.4 12M12 8.4L8.4 12" stroke="#a0a0a0" stroke-width="1.3"/></svg>
<div style="left:411px;top:99px;width:1136px;height:731px;background:#f0f0f0;"></div>
<div style="left:411px;top:99px;width:1136px;height:1px;background:#a0a0a0;"></div>
<div style="left:411px;top:99px;width:1px;height:731px;background:#a0a0a0;"></div>
<div style="left:412px;top:100px;width:1134px;height:1px;background:#696969;"></div>
<div style="left:412px;top:100px;width:1px;height:729px;background:#696969;"></div>
<div style="left:411px;top:829px;width:1136px;height:1px;background:#ffffff;"></div>
<div style="left:1546px;top:99px;width:1px;height:731px;background:#ffffff;"></div>
<div style="left:412px;top:828px;width:1134px;height:1px;background:#e3e3e3;"></div>
<div style="left:1545px;top:100px;width:1px;height:729px;background:#e3e3e3;"></div>
<div style="left:443px;top:200px;width:986px;height:493px;background:#ffffff;box-sizing:border-box;border:1px solid #505050;"></div>
<svg style="left:452px;top:207px;" width="16" height="16" viewBox="0 0 16 16"><rect x="2.2" y="13.6" width="12" height="1.5" fill="#787878" opacity="0.8"/><rect x="2" y="5" width="11.8" height="9.4" fill="#dce9fb"/><rect x="2" y="9.5" width="11.8" height="4.9" fill="#cfe2fa"/><rect x="8" y="4.8" width="5.6" height="1.8" fill="#1264d4"/><rect x="13.4" y="5.6" width="0.8" height="9" fill="#8c8c94" opacity="0.7"/><circle cx="4.5" cy="5.3" r="4.1" fill="#eef8ff" stroke="#d41818" stroke-width="1.2"/><path d="M4.5 1.3V2.2M4.5 8.4V9.3M0.5 5.3H1.4M7.6 5.3H8.5" stroke="#f07040" stroke-width="0.8"/><path d="M5.2 4V5.6L4.4 5.8" stroke="#101020" stroke-width="1.1" fill="none"/><path d="M10.8 11.9L14 9.1" stroke="#6c5cc4" stroke-width="2"/><path d="M10.2 12.5L10.9 11.8" stroke="#c07818" stroke-width="1.6"/><path d="M14.1 9L15.2 8" stroke="#f04020" stroke-width="1.8"/><rect x="14.8" y="8.4" width="1" height="1" fill="#f8c820"/></svg>
<span class="t u" style="left:473.4px;top:207.84px;font-size:12px;color:#000;font-weight:400;letter-spacing:-0.216px;">List of scale types</span>
<svg style="left:1408px;top:210px;" width="10" height="10" viewBox="0 0 10 10"><path d="M0 0L10 10M10 0L0 10" stroke="#000" stroke-width="1.1"/></svg>
<svg style="left:460px;top:236px;" width="24" height="24" viewBox="0 0 24 24"><path d="M1.1999999999999997 14.3L5.3 3.4L9.4 14.3" fill="none" stroke="#c09030" stroke-width="0.9"/><path d="M14.700000000000001 14.3L18.8 3.4L22.900000000000002 14.3" fill="none" stroke="#c09030" stroke-width="0.9"/><ellipse cx="12" cy="21.2" rx="5.8" ry="2.6" fill="url(#gGold)" stroke="#b88418" stroke-width="0.6"/><ellipse cx="12" cy="20.55" rx="4.06" ry="1.1700000000000002" fill="#fce88a" opacity="0.7"/><rect x="11.0" y="2.9" width="2.0" height="16.6" fill="url(#gGoldH)"/><rect x="5.0" y="2.9" width="14.0" height="0.8000000000000003" fill="url(#gGold)" stroke="#c89a28" stroke-width="0.4"/><circle cx="12" cy="0.9" r="1.5" fill="url(#gGold)" stroke="#c89a28" stroke-width="0.5"/><path d="M0.7999999999999998 14.0H9.8C9.8 19.25 0.7999999999999998 19.25 0.7999999999999998 14.0Z" fill="url(#gGold)" stroke="#b88418" stroke-width="0.5"/><path d="M1.5999999999999999 16.310000000000002H9.0" stroke="#fdf0a0" stroke-width="1.26" opacity="0.8"/><path d="M1.0999999999999999 14.5H9.5" stroke="#b07c10" stroke-width="1" opacity="0.85"/><path d="M14.3 14.0H23.3C23.3 19.25 14.3 19.25 14.3 14.0Z" fill="url(#gGold)" stroke="#b88418" stroke-width="0.5"/><path d="M15.100000000000001 16.310000000000002H22.5" stroke="#fdf0a0" stroke-width="1.26" opacity="0.8"/><path d="M14.600000000000001 14.5H23.0" stroke="#b07c10" stroke-width="1" opacity="0.85"/></svg>
<span class="t" style="left:500.2px;top:241.19px;font-size:11px;color:#000;font-weight:700;letter-spacing:0.292px;">List of scales types and kinds for producers</span>
<div style="left:444px;top:267px;width:984px;height:1px;background:#a0a0a0;"></div>
<div style="left:444px;top:269px;width:373px;height:17px;background:#f0f0f0;"></div>
<div style="left:444px;top:269px;width:373px;height:1px;background:#ffffff;"></div>
<div style="left:455px;top:269px;width:1px;height:17px;background:#000;"></div>
<div style="left:711px;top:269px;width:1px;height:17px;background:#000;"></div>
<div style="left:817px;top:270px;width:1px;height:16px;background:#a0a0a0;"></div>
<div style="left:444px;top:286px;width:374px;height:1px;background:#000;"></div>
<span class="t" style="left:457.5px;top:270.19px;font-size:11px;color:#000;font-weight:400;letter-spacing:-0.106px;">Manufacturer name</span>
<span class="t" style="left:713.7px;top:270.19px;font-size:11px;color:#000;font-weight:400;letter-spacing:-0.184px;">City</span>
<div style="left:444px;top:287px;width:11px;height:17px;background:#f0f0f0;"></div>
<div style="left:444px;top:287px;width:11px;height:1px;background:#ffffff;"></div>
<div style="left:444px;top:304px;width:11px;height:1px;background:#000;"></div>
<div style="left:455px;top:287px;width:1px;height:18px;background:#000;"></div>
<div style="left:456px;top:304px;width:362px;height:1px;background:#c0c0c0;"></div>
<div style="left:711px;top:287px;width:1px;height:18px;background:#c0c0c0;"></div>
<span class="t" style="left:457.5px;top:288.19px;font-size:11px;color:#000;font-weight:400;letter-spacing:-0.253px;">Scale Producer 1</span>
<span class="t" style="left:713.7px;top:288.19px;font-size:11px;color:#000;font-weight:400;letter-spacing:-0.378px;">Kraków</span>
<div style="left:444px;top:305px;width:11px;height:17px;background:#f0f0f0;"></div>
<div style="left:444px;top:305px;width:11px;height:1px;background:#ffffff;"></div>
<div style="left:444px;top:322px;width:11px;height:1px;background:#000;"></div>
<div style="left:455px;top:305px;width:1px;height:18px;background:#000;"></div>
<div style="left:456px;top:322px;width:362px;height:1px;background:#c0c0c0;"></div>
<div style="left:711px;top:305px;width:1px;height:18px;background:#c0c0c0;"></div>
<div style="left:456px;top:305px;width:362px;height:17px;background:#0078d7;"></div>
<svg style="left:447px;top:308px;" width="6" height="11" viewBox="0 0 6 11"><path d="M0 0L6 5.5L0 11Z" fill="#000"/></svg>
<div style="left:711px;top:305px;width:1px;height:17px;background:#c0c0c0;"></div>
<span class="t" style="left:457.5px;top:306.19px;font-size:11px;color:#fff;font-weight:400;letter-spacing:-0.253px;">Scale Producer 2</span>
<span class="t" style="left:713.7px;top:306.19px;font-size:11px;color:#fff;font-weight:400;letter-spacing:-0.521px;">Birmingham</span>
<div style="left:444px;top:323px;width:11px;height:17px;background:#f0f0f0;"></div>
<div style="left:444px;top:323px;width:11px;height:1px;background:#ffffff;"></div>
<div style="left:444px;top:340px;width:11px;height:1px;background:#000;"></div>
<div style="left:455px;top:323px;width:1px;height:18px;background:#000;"></div>
<div style="left:456px;top:340px;width:362px;height:1px;background:#c0c0c0;"></div>
<div style="left:711px;top:323px;width:1px;height:18px;background:#c0c0c0;"></div>
<span class="t" style="left:457.5px;top:324.19px;font-size:11px;color:#000;font-weight:400;letter-spacing:-0.253px;">Scale Producer 3</span>
<span class="t" style="left:713.7px;top:324.19px;font-size:11px;color:#000;font-weight:400;letter-spacing:-0.378px;">Kraków</span>
<div style="left:444px;top:341px;width:11px;height:17px;background:#f0f0f0;"></div>
<div style="left:444px;top:341px;width:11px;height:1px;background:#ffffff;"></div>
<div style="left:444px;top:358px;width:11px;height:1px;background:#000;"></div>
<div style="left:455px;top:341px;width:1px;height:18px;background:#000;"></div>
<div style="left:456px;top:358px;width:362px;height:1px;background:#c0c0c0;"></div>
<div style="left:711px;top:341px;width:1px;height:18px;background:#c0c0c0;"></div>
<span class="t" style="left:457.5px;top:342.19px;font-size:11px;color:#000;font-weight:400;letter-spacing:-0.253px;">Scale Producer 4</span>
<span class="t" style="left:713.7px;top:342.19px;font-size:11px;color:#000;font-weight:400;letter-spacing:-0.138px;">Freiburg</span>
<div style="left:444px;top:359px;width:11px;height:17px;background:#f0f0f0;"></div>
<div style="left:444px;top:359px;width:11px;height:1px;background:#ffffff;"></div>
<div style="left:444px;top:376px;width:11px;height:1px;background:#000;"></div>
<div style="left:455px;top:359px;width:1px;height:18px;background:#000;"></div>
<div style="left:456px;top:376px;width:362px;height:1px;background:#c0c0c0;"></div>
<div style="left:711px;top:359px;width:1px;height:18px;background:#c0c0c0;"></div>
<span class="t" style="left:457.5px;top:360.19px;font-size:11px;color:#000;font-weight:400;letter-spacing:-0.253px;">Scale Producer 5</span>
<span class="t" style="left:713.7px;top:360.19px;font-size:11px;color:#000;font-weight:400;letter-spacing:-0.138px;">Freiburg</span>
<div style="left:444px;top:377px;width:11px;height:17px;background:#f0f0f0;"></div>
<div style="left:444px;top:377px;width:11px;height:1px;background:#ffffff;"></div>
<div style="left:444px;top:394px;width:11px;height:1px;background:#000;"></div>
<div style="left:455px;top:377px;width:1px;height:18px;background:#000;"></div>
<div style="left:456px;top:394px;width:362px;height:1px;background:#c0c0c0;"></div>
<div style="left:711px;top:377px;width:1px;height:18px;background:#c0c0c0;"></div>
<span class="t" style="left:457.5px;top:378.19px;font-size:11px;color:#000;font-weight:400;letter-spacing:-0.253px;">Scale Producer 6</span>
<span class="t" style="left:713.7px;top:378.19px;font-size:11px;color:#000;font-weight:400;letter-spacing:-0.138px;">Freiburg</span>
<div style="left:444px;top:395px;width:11px;height:17px;background:#f0f0f0;"></div>
<div style="left:444px;top:395px;width:11px;height:1px;background:#ffffff;"></div>
<div style="left:444px;top:412px;width:11px;height:1px;background:#000;"></div>
<div style="left:455px;top:395px;width:1px;height:18px;background:#000;"></div>
<div style="left:456px;top:412px;width:362px;height:1px;background:#c0c0c0;"></div>
<div style="left:711px;top:395px;width:1px;height:18px;background:#c0c0c0;"></div>
<span class="t" style="left:457.5px;top:396.19px;font-size:11px;color:#000;font-weight:400;letter-spacing:-0.253px;">Scale Producer 7</span>
<span class="t" style="left:713.7px;top:396.19px;font-size:11px;color:#000;font-weight:400;letter-spacing:-0.138px;">Freiburg</span>
<div style="left:444px;top:413px;width:11px;height:17px;background:#f0f0f0;"></div>
<div style="left:444px;top:413px;width:11px;height:1px;background:#ffffff;"></div>
<div style="left:444px;top:430px;width:11px;height:1px;background:#000;"></div>
<div style="left:455px;top:413px;width:1px;height:18px;background:#000;"></div>
<div style="left:456px;top:430px;width:362px;height:1px;background:#c0c0c0;"></div>
<div style="left:711px;top:413px;width:1px;height:18px;background:#c0c0c0;"></div>
<span class="t" style="left:457.5px;top:414.19px;font-size:11px;color:#000;font-weight:400;letter-spacing:-0.253px;">Scale Producer 8</span>
<span class="t" style="left:713.7px;top:414.19px;font-size:11px;color:#000;font-weight:400;letter-spacing:-0.343px;">Wiesbaden</span>
<div style="left:444px;top:431px;width:11px;height:17px;background:#f0f0f0;"></div>
<div style="left:444px;top:431px;width:11px;height:1px;background:#ffffff;"></div>
<div style="left:444px;top:448px;width:11px;height:1px;background:#000;"></div>
<div style="left:455px;top:431px;width:1px;height:18px;background:#000;"></div>
<div style="left:456px;top:448px;width:362px;height:1px;background:#c0c0c0;"></div>
<div style="left:711px;top:431px;width:1px;height:18px;background:#c0c0c0;"></div>
<span class="t" style="left:457.5px;top:432.19px;font-size:11px;color:#000;font-weight:400;letter-spacing:-0.253px;">Scale Producer 9</span>
<span class="t" style="left:713.7px;top:432.19px;font-size:11px;color:#000;font-weight:400;letter-spacing:0.303px;">Stuttgart</span>
<div style="left:819px;top:269px;width:16px;height:407px;background:#f0f0f0;"></div>
<div style="left:819px;top:308px;width:15px;height:197px;background:#cdcdcd;"></div>
<svg style="left:823px;top:275px;" width="8" height="6" viewBox="0 0 8 6"><path d="M0.5 5.5L4 1.5L7.5 5.5" fill="none" stroke="#505050" stroke-width="1.6"/></svg>
<svg style="left:823px;top:664px;" width="8" height="6" viewBox="0 0 8 6"><path d="M0.5 0.5L4 4.5L7.5 0.5" fill="none" stroke="#505050" stroke-width="1.6"/></svg>
<div style="left:444px;top:676px;width:391px;height:15px;background:#f0f0f0;"></div>
<div style="left:461px;top:676px;width:17px;height:15px;background:#cdcdcd;"></div>
<svg style="left:449px;top:680px;" width="6" height="8" viewBox="0 0 6 8"><path d="M5.5 0.5L1.5 4L5.5 7.5" fill="none" stroke="#505050" stroke-width="1.6"/></svg>
<svg style="left:807px;top:680px;" width="6" height="8" viewBox="0 0 6 8"><path d="M0.5 0.5L4.5 4L0.5 7.5" fill="none" stroke="#505050" stroke-width="1.6"/></svg>
<div style="left:835px;top:269px;width:3px;height:423px;background:#bababa;"></div>
<div style="left:1132px;top:269px;width:3px;height:423px;background:#bababa;"></div>
<div style="left:838px;top:269px;width:294px;height:26px;background:#f0f0f0;"></div>
<svg style="left:843px;top:274px;" width="16" height="16" viewBox="0 0 16 16"><path d="M6.5 0.5H9.5V6.5H15.5V9.5H9.5V15.5H6.5V9.5H0.5V6.5H6.5Z" fill="#94d884" stroke="#54ac54" stroke-width="1" stroke-linejoin="round"/><path d="M8 1.5V14.5M1.5 8H14.5" stroke="#c0ecb8" stroke-width="0.9" opacity="0.7"/></svg>
<svg style="left:866px;top:274px;" width="16" height="16" viewBox="0 0 16 16"><path d="M8 1L15 15H1Z" fill="url(#gGreen)" stroke="#3fa040" stroke-width="1" stroke-linejoin="round"/></svg>
<svg style="left:889px;top:274px;" width="16" height="16" viewBox="0 0 16 16"><rect x="0.5" y="6.3" width="15" height="3.6" fill="#f07860" stroke="#d84a3a" stroke-width="1"/></svg>
<div style="left:911px;top:271px;width:1px;height:22px;background:#a0a0a0;"></div>
<svg style="left:916px;top:274px;" width="16" height="16" viewBox="0 0 16 16"><path d="M1.5 14.5L7 9" stroke="#f0a850" stroke-width="2.6" stroke-linecap="round"/><circle cx="10.5" cy="5.5" r="4.8" fill="#e4f4ff" stroke="#a8b8e0" stroke-width="1.2"/><path d="M8 4C9 2.5 11 2.3 12.5 3.2" stroke="#fff" stroke-width="1.2" fill="none"/></svg>
<div style="left:1135px;top:269px;width:293px;height:26px;background:#f0f0f0;"></div>
<svg style="left:1140px;top:274px;" width="16" height="16" viewBox="0 0 16 16"><path d="M6.5 0.5H9.5V6.5H15.5V9.5H9.5V15.5H6.5V9.5H0.5V6.5H6.5Z" fill="#94d884" stroke="#54ac54" stroke-width="1" stroke-linejoin="round"/><path d="M8 1.5V14.5M1.5 8H14.5" stroke="#c0ecb8" stroke-width="0.9" opacity="0.7"/></svg>
<svg style="left:1163px;top:274px;" width="16" height="16" viewBox="0 0 16 16"><path d="M8 1L15 15H1Z" fill="url(#gGreen)" stroke="#3fa040" stroke-width="1" stroke-linejoin="round"/></svg>
<svg style="left:1186px;top:274px;" width="16" height="16" viewBox="0 0 16 16"><rect x="0.5" y="6.3" width="15" height="3.6" fill="#f07860" stroke="#d84a3a" stroke-width="1"/></svg>
<div style="left:1208px;top:271px;width:1px;height:22px;background:#a0a0a0;"></div>
<svg style="left:1213px;top:274px;" width="16" height="16" viewBox="0 0 16 16"><path d="M1.5 14.5L7 9" stroke="#f0a850" stroke-width="2.6" stroke-linecap="round"/><circle cx="10.5" cy="5.5" r="4.8" fill="#e4f4ff" stroke="#a8b8e0" stroke-width="1.2"/><path d="M8 4C9 2.5 11 2.3 12.5 3.2" stroke="#fff" stroke-width="1.2" fill="none"/></svg>
<div style="left:838px;top:295px;width:273px;height:17px;background:#f0f0f0;"></div>
<div style="left:838px;top:295px;width:273px;height:1px;background:#ffffff;"></div>
<div style="left:849px;top:295px;width:1px;height:17px;background:#000;"></div>
<div style="left:1111px;top:295px;width:1px;height:18px;background:#000;"></div>
<div style="left:838px;top:312px;width:274px;height:1px;background:#000;"></div>
<span class="t" style="left:851.2px;top:296.19px;font-size:11px;color:#000;font-weight:400;letter-spacing:-0.039px;">Name of the type</span>
<div style="left:838px;top:313px;width:11px;height:17px;background:#f0f0f0;"></div>
<div style="left:838px;top:313px;width:11px;height:1px;background:#ffffff;"></div>
<div style="left:838px;top:330px;width:11px;height:1px;background:#000;"></div>
<div style="left:849px;top:313px;width:1px;height:18px;background:#000;"></div>
<div style="left:850px;top:330px;width:262px;height:1px;background:#c0c0c0;"></div>
<div style="left:1111px;top:313px;width:1px;height:18px;background:#c0c0c0;"></div>
<div style="left:850px;top:313px;width:261px;height:17px;background:#0078d7;"></div>
<svg style="left:841px;top:316px;" width="6" height="11" viewBox="0 0 6 11"><path d="M0 0L6 5.5L0 11Z" fill="#000"/></svg>
<span class="t" style="left:851.2px;top:314.19px;font-size:11px;color:#fff;font-weight:400;letter-spacing:-0.518px;">Truck Scale MS</span>
<div style="left:838px;top:331px;width:11px;height:17px;background:#f0f0f0;"></div>
<div style="left:838px;top:331px;width:11px;height:1px;background:#ffffff;"></div>
<div style="left:838px;top:348px;width:11px;height:1px;background:#000;"></div>
<div style="left:849px;top:331px;width:1px;height:18px;background:#000;"></div>
<div style="left:850px;top:348px;width:262px;height:1px;background:#c0c0c0;"></div>
<div style="left:1111px;top:331px;width:1px;height:18px;background:#c0c0c0;"></div>
<span class="t" style="left:851.2px;top:332.19px;font-size:11px;color:#000;font-weight:400;letter-spacing:-0.470px;">Truck Scale MZ</span>
<div style="left:838px;top:349px;width:11px;height:17px;background:#f0f0f0;"></div>
<div style="left:838px;top:349px;width:11px;height:1px;background:#ffffff;"></div>
<div style="left:838px;top:366px;width:11px;height:1px;background:#000;"></div>
<div style="left:849px;top:349px;width:1px;height:18px;background:#000;"></div>
<div style="left:850px;top:366px;width:262px;height:1px;background:#c0c0c0;"></div>
<div style="left:1111px;top:349px;width:1px;height:18px;background:#c0c0c0;"></div>
<span class="t" style="left:851.2px;top:350.19px;font-size:11px;color:#000;font-weight:400;letter-spacing:-0.506px;">Truck Scale XZ</span>
<div style="left:1135px;top:295px;width:272px;height:17px;background:#f0f0f0;"></div>
<div style="left:1135px;top:295px;width:272px;height:1px;background:#ffffff;"></div>
<div style="left:1146px;top:295px;width:1px;height:17px;background:#000;"></div>
<div style="left:1407px;top:295px;width:1px;height:18px;background:#000;"></div>
<div style="left:1135px;top:312px;width:273px;height:1px;background:#000;"></div>
<span class="t" style="left:1148.2px;top:296.19px;font-size:11px;color:#000;font-weight:400;letter-spacing:-0.177px;">Name of the kind</span>
<div style="left:1135px;top:313px;width:11px;height:17px;background:#f0f0f0;"></div>
<div style="left:1135px;top:313px;width:11px;height:1px;background:#ffffff;"></div>
<div style="left:1135px;top:330px;width:11px;height:1px;background:#000;"></div>
<div style="left:1146px;top:313px;width:1px;height:18px;background:#000;"></div>
<div style="left:1147px;top:330px;width:261px;height:1px;background:#c0c0c0;"></div>
<div style="left:1407px;top:313px;width:1px;height:18px;background:#c0c0c0;"></div>
<div style="left:1147px;top:313px;width:260px;height:17px;background:#0078d7;"></div>
<svg style="left:1138px;top:316px;" width="6" height="11" viewBox="0 0 6 11"><path d="M0 0L6 5.5L0 11Z" fill="#000"/></svg>
<span class="t" style="left:1148.2px;top:314.19px;font-size:11px;color:#fff;font-weight:400;letter-spacing:-0.668px;">AMS 50</span>
<div style="left:1135px;top:331px;width:11px;height:17px;background:#f0f0f0;"></div>
<div style="left:1135px;top:331px;width:11px;height:1px;background:#ffffff;"></div>
<div style="left:1135px;top:348px;width:11px;height:1px;background:#000;"></div>
<div style="left:1146px;top:331px;width:1px;height:18px;background:#000;"></div>
<div style="left:1147px;top:348px;width:261px;height:1px;background:#c0c0c0;"></div>
<div style="left:1407px;top:331px;width:1px;height:18px;background:#c0c0c0;"></div>
<span class="t" style="left:1148.2px;top:332.19px;font-size:11px;color:#000;font-weight:400;letter-spacing:-0.668px;">AMS 60</span>
</body></html>
